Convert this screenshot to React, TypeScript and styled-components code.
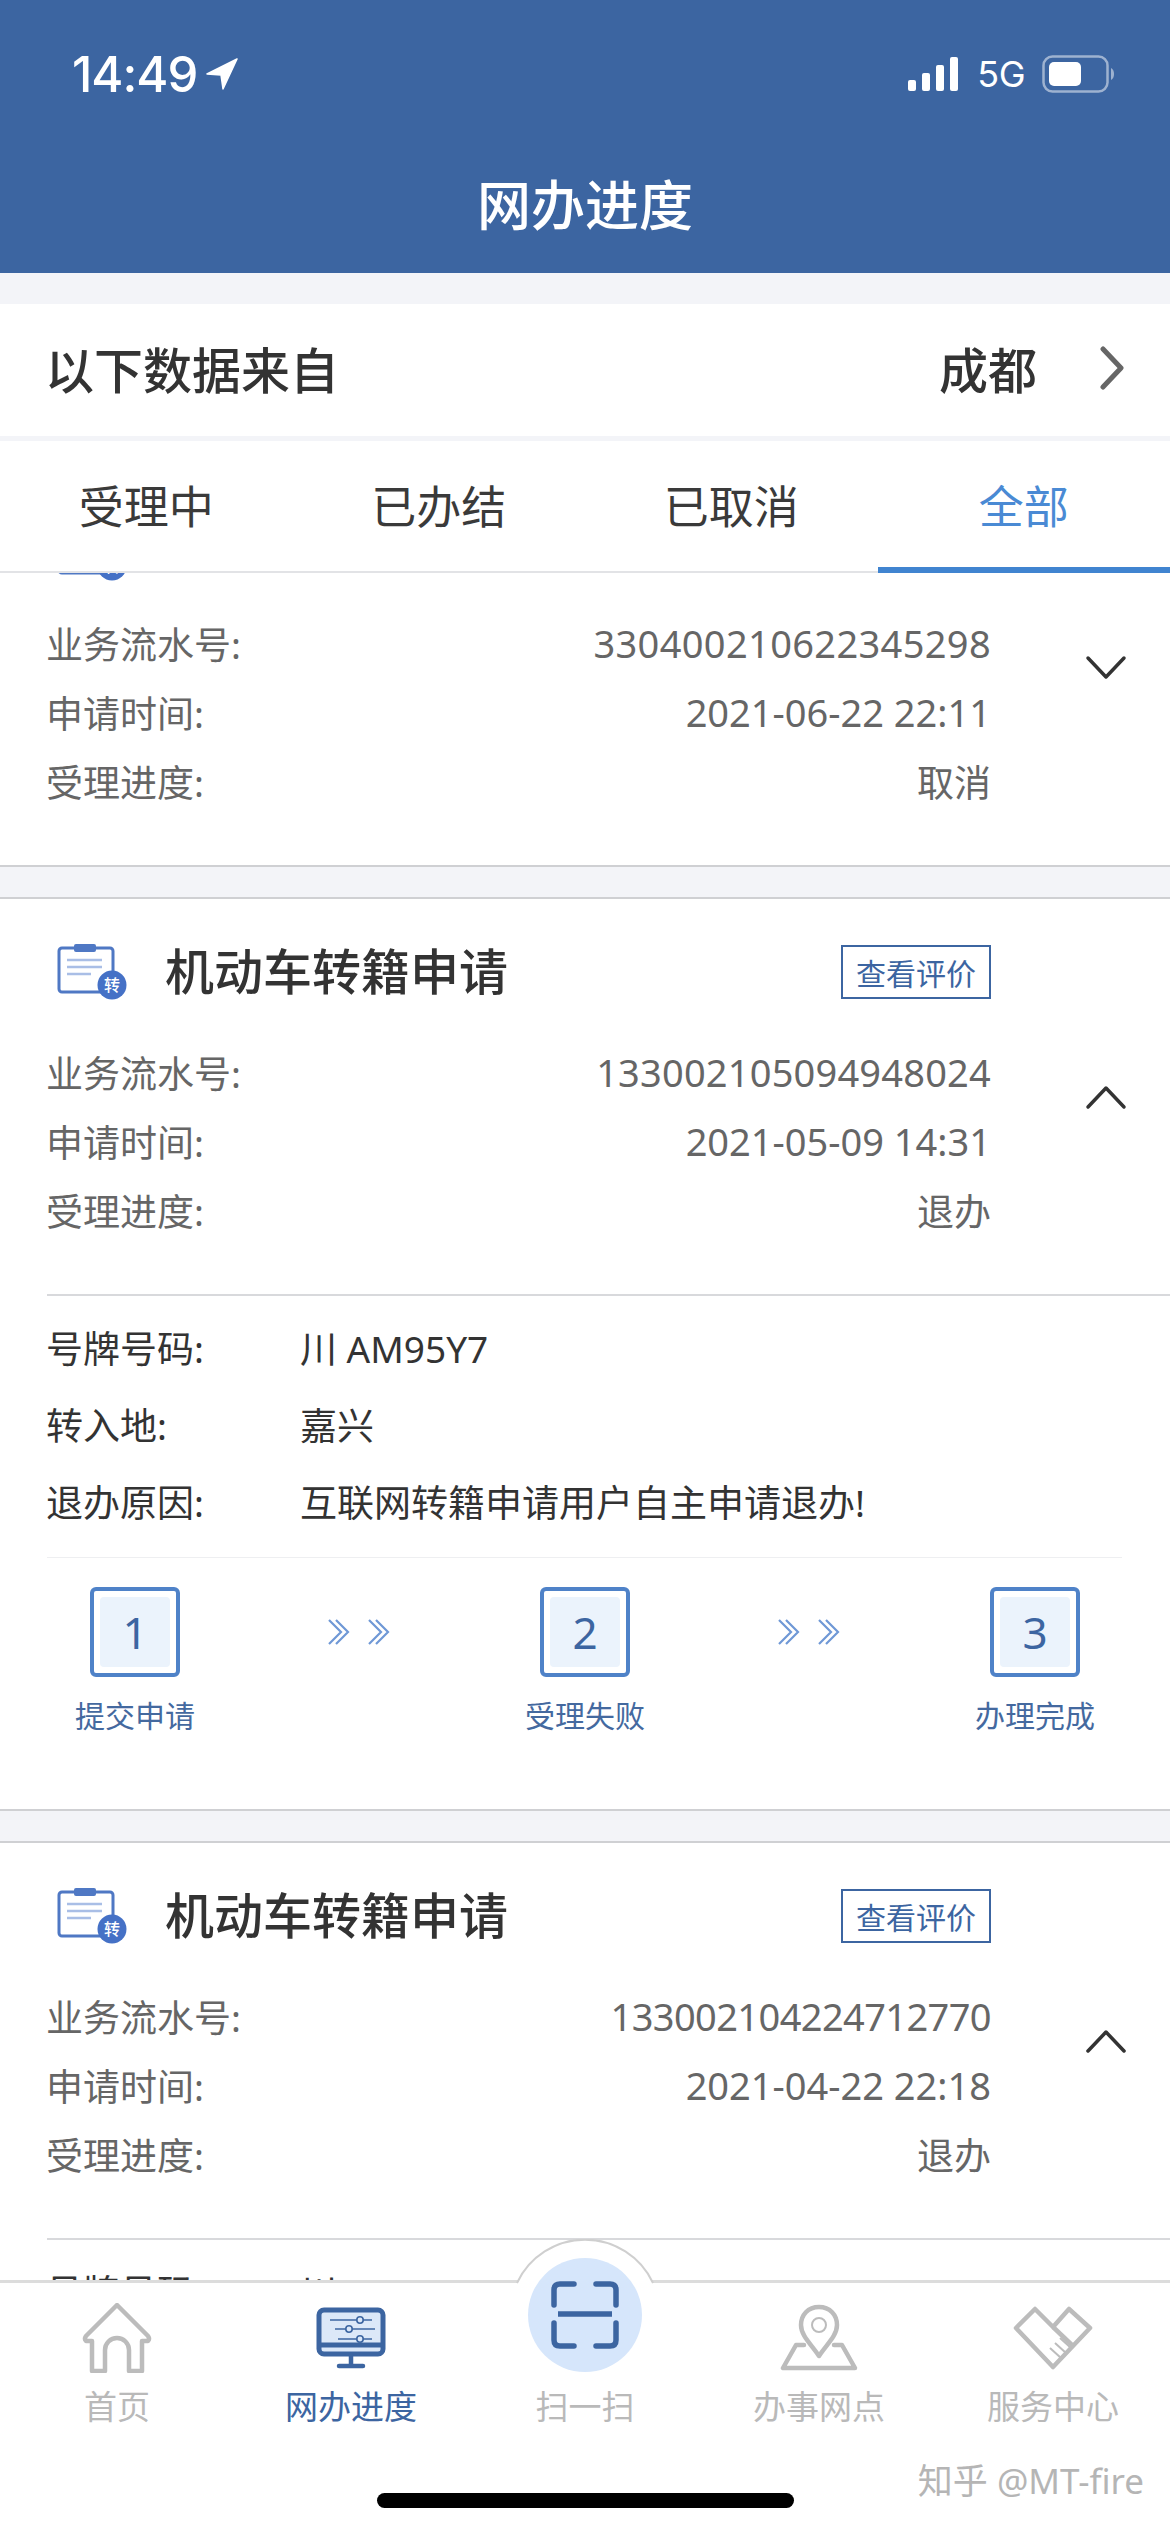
import React, { FC } from "react";
import styled, { createGlobalStyle } from "styled-components";

const BLUE = "#3c65a1";
const FONT = `"Noto Sans", "Noto Sans CJK SC", sans-serif`;

const GlobalStyle = createGlobalStyle`
  html, body {
    margin: 0;
    padding: 0;
    background: #fff;
  }
  body {
    font-family: ${FONT};
  }
`;

const Screen = styled.div`
  width: 1170px;
  height: 2532px;
  display: flex;
  flex-direction: column;
  position: relative;
  overflow: hidden;
  background: #f3f4f8;
`;

const Header = styled.header`
  height: 273px;
  flex: none;
  background: ${BLUE};
  color: #fff;
  display: flex;
  flex-direction: column;
  position: relative;
  z-index: 3;
`;

const StatusBar = styled.div`
  height: 40px;
  margin-top: 54px;
  padding: 0 56px 0 72px;
  display: flex;
  align-items: center;
  justify-content: space-between;
`;

const Clock = styled.div`
  display: flex;
  align-items: center;
  gap: 9px;
  font-family: Inter, sans-serif;
  font-size: 49px;
  font-weight: 500;
  letter-spacing: -1px;
`;

const StatusRight = styled.div`
  display: flex;
  align-items: center;
  gap: 17px;
  font-family: Inter, sans-serif;
  font-size: 36px;
  letter-spacing: -0.5px;
`;

const PageTitle = styled.h1`
  margin: 76px 0 0;
  font-size: 54px;
  line-height: 70px;
  font-weight: 500;
  text-align: center;
`;

const CityRow = styled.div`
  flex: none;
  height: 132px;
  box-sizing: border-box;
  margin-top: 31px;
  padding: 0 45px 5px 45px;
  background: #fff;
  display: flex;
  align-items: center;
  font-size: 49px;
  font-weight: 500;
  color: #333;
  position: relative;
  z-index: 3;
`;

const CityName = styled.span`
  margin-left: auto;
  margin-right: 62px;
`;

const Tabs = styled.nav`
  flex: none;
  height: 132px;
  margin-top: 5px;
  background: #fff;
  border-bottom: 2px solid #e2e3e6;
  box-sizing: border-box;
  display: grid;
  grid-template-columns: repeat(4, 1fr);
  position: relative;
  z-index: 3;
`;

const Tab = styled.div<{ $active?: boolean }>`
  display: flex;
  align-items: center;
  justify-content: center;
  font-size: 45px;
  color: ${(p) => (p.$active ? "#4a8ad4" : "#3a3a3a")};
  border-bottom: 6px solid ${(p) => (p.$active ? "#4084d0" : "transparent")};
  margin-bottom: -2px;
`;

const List = styled.main`
  flex: 1;
  min-height: 0;
  overflow: hidden;
`;

const ListInner = styled.div`
  margin-top: -105px;
  display: flex;
  flex-direction: column;
  gap: 30px;
`;

const Card = styled.section`
  background: #fff;
  border-top: 2px solid #cfd0d3;
  border-bottom: 2px solid #cfd0d3;
  padding-top: 45px;
`;

const CardHead = styled.div`
  height: 55px;
  padding: 0 179px 0 57px;
  display: flex;
  align-items: center;
  font-size: 49px;
  font-weight: 500;
  color: #333;
`;

const CardTitle = styled.span`
  padding-bottom: 6px;
`;

const CardIcon = styled.svg<{ $nudge?: boolean }>`
  width: 72px;
  height: 56px;
  margin-right: 36px;
  flex: none;
  transform: translateY(${(p) => (p.$nudge ? "10px" : "0")});
`;

const RateButton = styled.div`
  margin-left: auto;
  width: 150px;
  height: 54px;
  box-sizing: border-box;
  border: 2px solid ${BLUE};
  display: flex;
  align-items: center;
  justify-content: center;
  font-size: 30px;
  font-weight: 400;
  color: ${BLUE};
`;

const Summary = styled.div`
  margin-top: 38px;
  padding-left: 46px;
  padding-bottom: 50px;
  display: flex;
  align-items: flex-start;
`;

const Fields = styled.div`
  width: 945px;
  flex: none;
`;

const Field = styled.div`
  height: 69px;
  display: flex;
  align-items: center;
  justify-content: space-between;
  font-size: 37px;
  color: #666;
`;

const FieldValue = styled.span<{ $spacing?: number }>`
  font-size: 38px;
  letter-spacing: ${(p) => p.$spacing ?? 0}px;
`;

const Toggle = styled.svg`
  width: 42px;
  height: 26px;
  margin-top: 47px;
  margin-left: 94px;
  flex: none;
`;

const Details = styled.div`
  margin-left: 47px;
  border-top: 2px solid #d8d9dc;
  padding: 12px 0 18px;
`;

const DetailRow = styled.div`
  height: 77px;
  margin-left: -1px;
  display: flex;
  align-items: center;
  font-size: 37px;
  color: #333;
`;

const DetailLabel = styled.span`
  width: 254px;
  flex: none;
`;

const Steps = styled.div`
  margin: 0 48px 0 47px;
  border-top: 1px solid #eeeff1;
  padding: 29px 7px 72px 8px;
  display: flex;
  justify-content: space-between;
  align-items: flex-start;
`;

const Step = styled.div`
  width: 160px;
  display: flex;
  flex-direction: column;
  align-items: center;
`;

const StepBox = styled.div`
  width: 90px;
  height: 90px;
  box-sizing: border-box;
  border: 4px solid #4f82c8;
  border-radius: 6px;
  padding: 6px;
`;

const StepNumber = styled.div`
  height: 100%;
  background: #ebf3fc;
  border-radius: 4px;
  display: flex;
  align-items: center;
  justify-content: center;
  font-size: 44px;
  color: ${BLUE};
`;

const StepLabel = styled.div`
  margin-top: 18px;
  height: 42px;
  line-height: 42px;
  font-size: 30px;
  color: #44699f;
  white-space: nowrap;
`;

const StepArrow = styled.svg`
  width: 64px;
  height: 26px;
  margin-top: 32px;
  flex: none;
`;

const TabBar = styled.footer`
  flex: none;
  height: 252px;
  box-sizing: border-box;
  background: #fff;
  border-top: 3px solid #dcdcdc;
  display: flex;
  flex-direction: column;
  position: relative;
  z-index: 4;
`;

const Bump = styled.svg`
  position: absolute;
  left: 515px;
  top: -44px;
  width: 140px;
  height: 47px;
`;

const ScanCircle = styled.div`
  position: absolute;
  left: 528px;
  top: -25px;
  width: 114px;
  height: 114px;
  border-radius: 50%;
  background: #d6e6fb;
  display: flex;
  align-items: center;
  justify-content: center;
`;

const NavRow = styled.div`
  padding-top: 20px;
  display: grid;
  grid-template-columns: repeat(5, 1fr);
`;

const NavItem = styled.div<{ $active?: boolean }>`
  display: flex;
  flex-direction: column;
  align-items: center;
  font-size: 33px;
  color: ${(p) => (p.$active ? BLUE : "#b9b9b9")};
`;

const NavIconSlot = styled.div`
  height: 70px;
  display: flex;
  align-items: center;
  justify-content: center;
`;

const NavLabel = styled.div`
  margin-top: 14px;
  height: 40px;
  line-height: 40px;
`;

const HomeIndicator = styled.div`
  width: 417px;
  height: 15px;
  margin: 66px auto 0;
  border-radius: 8px;
  background: #000;
`;

const Watermark = styled.div`
  position: absolute;
  right: 26px;
  bottom: 28px;
  font-size: 35px;
  color: #b5b5b5;
  white-space: nowrap;
`;

const LocationIcon = () => (
  <svg width="32" height="32" viewBox="0 0 32 32">
    <path d="M31 1 L1 16 L15 17 L17 31 Z" fill="#fff" stroke="#fff" strokeWidth="1.5" strokeLinejoin="round" />
  </svg>
);

const SignalIcon = () => (
  <svg width="52" height="34" viewBox="0 0 52 34" fill="#fff">
    <rect x="0" y="23" width="8" height="11" rx="2" />
    <rect x="14" y="16" width="8" height="18" rx="2" />
    <rect x="28" y="8" width="8" height="26" rx="2" />
    <rect x="42" y="0" width="8" height="34" rx="2" />
  </svg>
);

const BatteryIcon = () => (
  <svg width="72" height="38" viewBox="0 0 72 38">
    <rect x="1.5" y="1.5" width="64" height="35" rx="9" fill="none" stroke="#fff" strokeOpacity="0.5" strokeWidth="2.5" />
    <rect x="7" y="7" width="32" height="24" rx="5" fill="#fff" />
    <path d="M69 13 C71 14 72 16 72 19 C72 22 71 24 69 25 Z" fill="#fff" fillOpacity="0.5" />
  </svg>
);

const ClipboardIcon: FC<{ nudge?: boolean }> = ({ nudge }) => (
  <CardIcon $nudge={nudge} viewBox="0 0 72 56">
    <rect x="2" y="4" width="54" height="44" rx="3" fill="#fff" stroke="#4f78c4" strokeWidth="3" />
    <rect x="17" y="0" width="22" height="8" rx="2" fill="#4f78c4" />
    <path d="M10 16 H45 M10 23 H45 M10 30 H34" stroke="#a9bee6" strokeWidth="2.5" />
    <circle cx="55" cy="41" r="14.5" fill="#4571c6" />
    <text x="55" y="47" textAnchor="middle" fontSize="16" fill="#fff" fontFamily={FONT}>
      转
    </text>
  </CardIcon>
);

const ChevronToggle: FC<{ open: boolean }> = ({ open }) => (
  <Toggle viewBox="0 0 42 26">
    <path
      d={open ? "M3 23 L21 4 L39 23" : "M3 3 L21 22 L39 3"}
      fill="none"
      stroke="#333"
      strokeWidth="3.5"
      strokeLinecap="round"
      strokeLinejoin="round"
    />
  </Toggle>
);

const DoubleArrow = () => (
  <StepArrow viewBox="0 0 64 26">
    <path
      d="M1 1 L13 13 L1 25 M8 1 L20 13 L8 25 M41 1 L53 13 L41 25 M48 1 L60 13 L48 25"
      fill="none"
      stroke="#6f98d6"
      strokeWidth="2.2"
    />
  </StepArrow>
);

const HomeIcon = () => (
  <svg width="70" height="70" viewBox="0 0 70 70" fill="none" stroke="#bcbcbc" strokeWidth="4.5" strokeLinejoin="round">
    <path d="M10 68 V38 H4 Q2 36 4 33 L35 2 L66 33 Q68 36 66 38 H60 V68 H47 V47 A12 12 0 0 0 23 47 V68 Z" />
  </svg>
);

const MonitorIcon = () => (
  <svg width="70" height="62" viewBox="0 0 70 62">
    <rect x="3" y="3" width="64" height="44" rx="5" fill="#dce8f8" stroke={BLUE} strokeWidth="5" />
    <path d="M3 38 H67" stroke={BLUE} strokeWidth="5" />
    <path d="M35 48 V58 M23 59 H47" stroke={BLUE} strokeWidth="4.5" strokeLinecap="round" />
    <path d="M14 13 H56 M19 22 H59 M22 32 H56" stroke={BLUE} strokeWidth="1.6" />
    <g fill="#dce8f8" stroke={BLUE} strokeWidth="1.6">
      <circle cx="44" cy="13" r="3.2" />
      <circle cx="33" cy="22" r="3.2" />
      <circle cx="44" cy="32" r="3.2" />
    </g>
  </svg>
);

const ScanIcon = () => (
  <svg width="68" height="68" viewBox="0 0 68 68" fill="none" stroke={BLUE} strokeWidth="5.5" strokeLinecap="round">
    <path d="M23 3 H9 Q3 3 3 9 V24" />
    <path d="M45 3 H59 Q65 3 65 9 V24" />
    <path d="M3 42 V59 Q3 65 9 65 H23" />
    <path d="M65 42 V59 Q65 65 59 65 H45" />
    <path d="M7 33 H61" strokeLinecap="butt" />
  </svg>
);

const PinIcon = () => (
  <svg width="78" height="68" viewBox="0 0 78 68" fill="none" stroke="#bcbcbc" strokeWidth="4.5" strokeLinejoin="round">
    <path d="M39 3 C28 3 21 11 21 21 C21 32 32 41 39 52 C46 41 57 32 57 21 C57 11 50 3 39 3 Z" />
    <circle cx="39" cy="21" r="7" strokeWidth="2" />
    <path d="M24 41 H16 L3 64 H75 L62 41 H54" strokeLinecap="round" />
  </svg>
);

const HandshakeIcon = () => (
  <svg width="80" height="64" viewBox="0 0 80 64" fill="none" stroke="#bcbcbc" strokeWidth="4.5" strokeLinejoin="round">
    <path d="M3 22 L22 3 L40 21 L56 3 L77 22 L40 61 Z" />
    <path d="M40 21 L60 40" />
    <path d="M48 52 L37 42 M53 47 L42 37 M58 42 L47 32" strokeWidth="2" />
  </svg>
);

type CardData = {
  serial: string;
  spacing: number;
  time: string;
  status: string;
  open?: boolean;
  nudge?: boolean;
  details?: string[][];
};

const cards: CardData[] = [
  { serial: "330400210622345298", spacing: 0.35, time: "2021-06-22 22:11", status: "取消", nudge: true },
  {
    serial: "133002105094948024",
    spacing: 0.2,
    time: "2021-05-09 14:31",
    status: "退办",
    open: true,
    details: [
      ["号牌号码:", "川 AM95Y7"],
      ["转入地:", "嘉兴"],
      ["退办原因:", "互联网转籍申请用户自主申请退办!"],
    ],
  },
  {
    serial: "133002104224712770",
    spacing: -0.6,
    time: "2021-04-22 22:18",
    status: "退办",
    open: true,
    details: [
      ["号牌号码:", "川 AM95Y7"],
      ["转入地:", "嘉兴"],
    ],
  },
];

const stepNames = ["提交申请", "受理失败", "办理完成"];

const ProgressCard: FC<{ card: CardData }> = ({ card }) => (
  <Card>
    <CardHead>
      <ClipboardIcon nudge={card.nudge} />
      <CardTitle>机动车转籍申请</CardTitle>
      <RateButton>查看评价</RateButton>
    </CardHead>
    <Summary>
      <Fields>
        <Field>
          业务流水号:<FieldValue $spacing={card.spacing}>{card.serial}</FieldValue>
        </Field>
        <Field>
          申请时间:<FieldValue>{card.time}</FieldValue>
        </Field>
        <Field>
          受理进度:<span>{card.status}</span>
        </Field>
      </Fields>
      <ChevronToggle open={!!card.open} />
    </Summary>
    {card.details && (
      <Details>
        {card.details.map(([label, value]) => (
          <DetailRow key={label}>
            <DetailLabel>{label}</DetailLabel>
            {value}
          </DetailRow>
        ))}
      </Details>
    )}
    {card.details && (
      <Steps>
        {stepNames.map((name, index) => (
          <React.Fragment key={name}>
            {index > 0 && <DoubleArrow />}
            <Step>
              <StepBox>
                <StepNumber>{index + 1}</StepNumber>
              </StepBox>
              <StepLabel>{name}</StepLabel>
            </Step>
          </React.Fragment>
        ))}
      </Steps>
    )}
  </Card>
);

const App: FC = () => (
  <Screen>
    <GlobalStyle />
    <Header>
      <StatusBar>
        <Clock>
          14:49
          <LocationIcon />
        </Clock>
        <StatusRight>
          <SignalIcon />
          5G
          <BatteryIcon />
        </StatusRight>
      </StatusBar>
      <PageTitle>网办进度</PageTitle>
    </Header>
    <CityRow>
      以下数据来自
      <CityName>成都</CityName>
      <svg width="26" height="44" viewBox="0 0 26 44">
        <path d="M4 3 L22 22 L4 41" fill="none" stroke="#666" strokeWidth="5" strokeLinecap="round" strokeLinejoin="round" />
      </svg>
    </CityRow>
    <Tabs>
      <Tab>受理中</Tab>
      <Tab>已办结</Tab>
      <Tab>已取消</Tab>
      <Tab $active>全部</Tab>
    </Tabs>
    <List>
      <ListInner>
        {cards.map((card) => (
          <ProgressCard key={card.serial} card={card} />
        ))}
      </ListInner>
    </List>
    <TabBar>
      <Bump viewBox="0 0 140 47">
        <path d="M2 44 A75 75 0 0 1 138 44" fill="#fff" stroke="#cfcfcf" strokeWidth="2" />
      </Bump>
      <ScanCircle>
        <ScanIcon />
      </ScanCircle>
      <NavRow>
        <NavItem>
          <NavIconSlot>
            <HomeIcon />
          </NavIconSlot>
          <NavLabel>首页</NavLabel>
        </NavItem>
        <NavItem $active>
          <NavIconSlot>
            <MonitorIcon />
          </NavIconSlot>
          <NavLabel>网办进度</NavLabel>
        </NavItem>
        <NavItem>
          <NavIconSlot />
          <NavLabel>扫一扫</NavLabel>
        </NavItem>
        <NavItem>
          <NavIconSlot>
            <PinIcon />
          </NavIconSlot>
          <NavLabel>办事网点</NavLabel>
        </NavItem>
        <NavItem>
          <NavIconSlot>
            <HandshakeIcon />
          </NavIconSlot>
          <NavLabel>服务中心</NavLabel>
        </NavItem>
      </NavRow>
      <HomeIndicator />
      <Watermark>知乎 @MT-fire</Watermark>
    </TabBar>
  </Screen>
);

export default App;
